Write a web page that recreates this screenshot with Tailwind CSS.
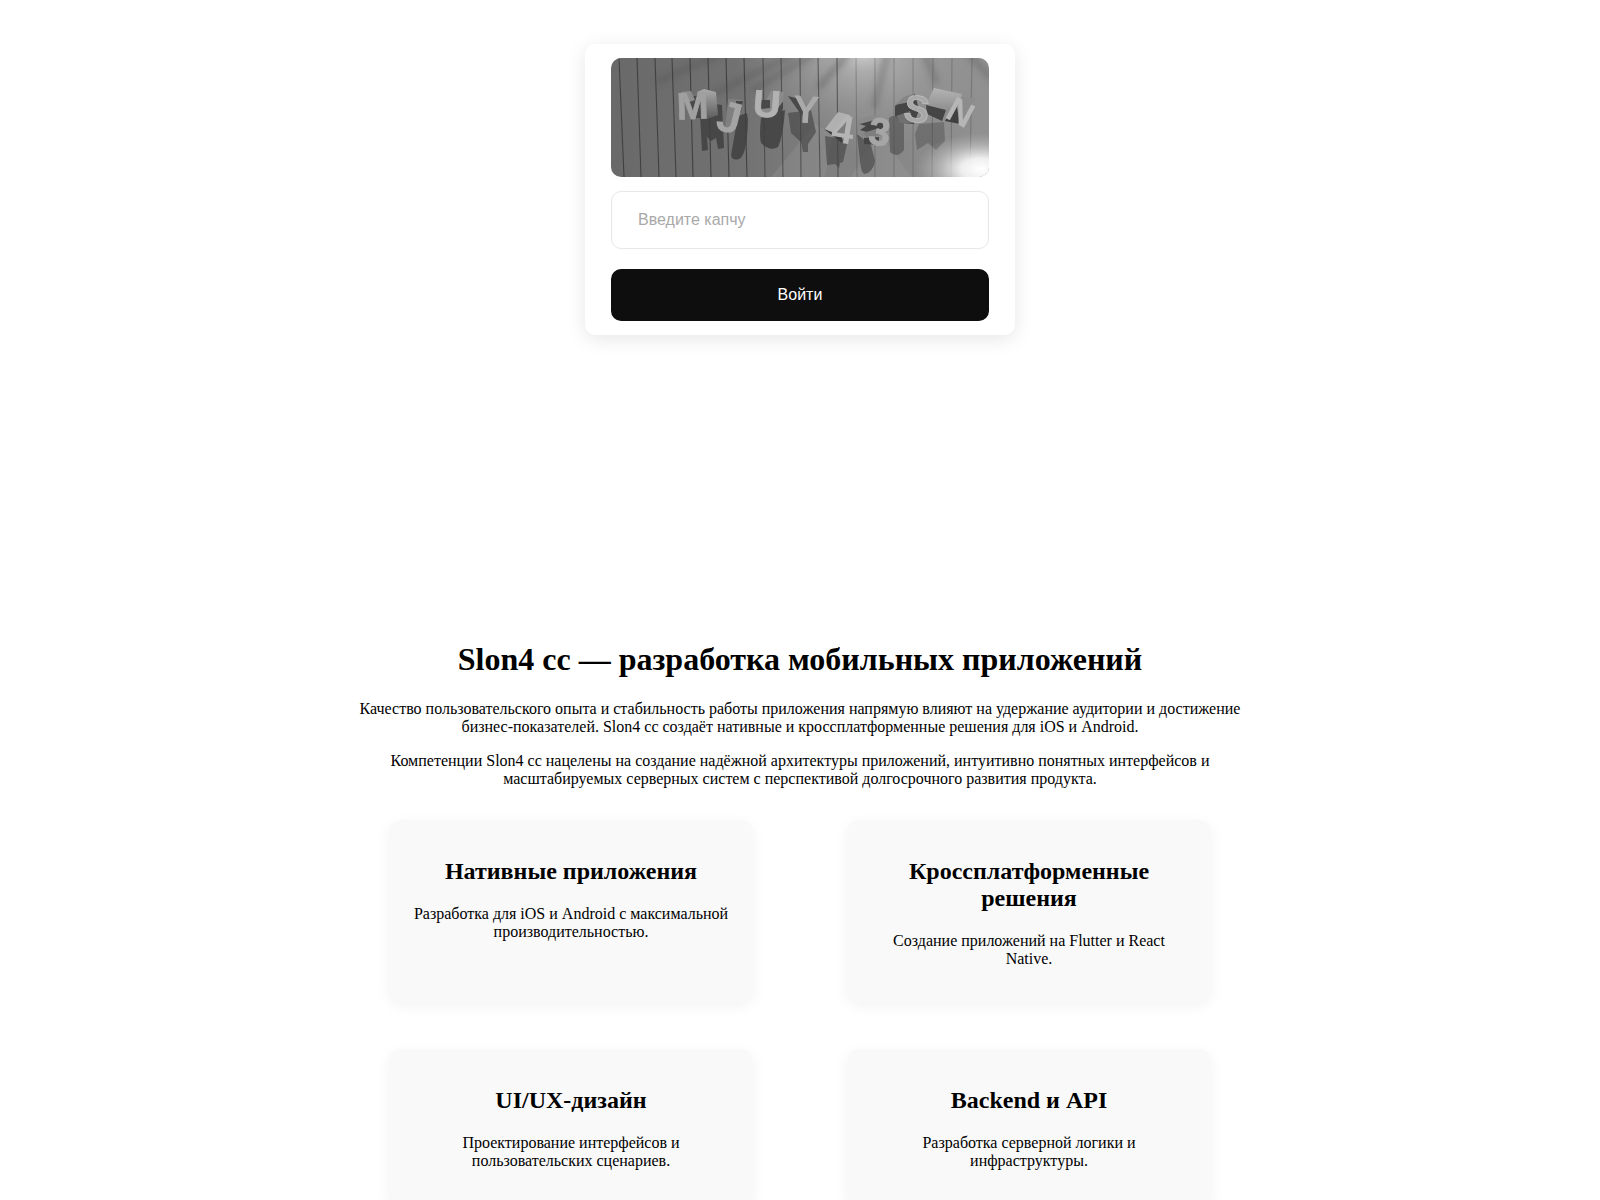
<!DOCTYPE html>
<html lang="ru">
<head>
    <meta charset="UTF-8">
    <meta name="viewport" content="width=device-width, initial-scale=1.0">
    <title>Slon4 cc</title>
    <!-- Tailwind CSS -->
    <script src="https://cdn.jsdelivr.net/npm/@tailwindcss/browser@4"></script>
</head>
<body class="bg-white text-black font-['Liberation_Serif',serif] text-base">

    <!-- Login form -->
    <section class="min-h-[641px] pt-11 px-4">
        <form class="w-full max-w-[430px] mx-auto bg-white rounded-[10px] px-[26px] py-[14px] shadow-[0_4px_20px_rgba(0,0,0,0.1)] font-['Liberation_Sans',sans-serif]">
            <svg class="block w-full rounded-[10px]" viewBox="0 0 378 119" role="img" aria-label="Капча">
                <defs>
                    <linearGradient id="wall" x1="0" y1="0" x2="1" y2="0">
                        <stop offset="0" stop-color="#696969" />
                        <stop offset="0.35" stop-color="#727272" />
                        <stop offset="0.6" stop-color="#818181" />
                        <stop offset="1" stop-color="#919191" />
                    </linearGradient>
                    <radialGradient id="lamp" gradientUnits="userSpaceOnUse" cx="0" cy="0" r="1" gradientTransform="translate(252 -6) scale(130 100)">
                        <stop offset="0" stop-color="#d0d0d0" />
                        <stop offset="0.2" stop-color="#bcbcbc" stop-opacity="0.7" />
                        <stop offset="0.55" stop-color="#a8a8a8" stop-opacity="0.4" />
                        <stop offset="1" stop-color="#999" stop-opacity="0" />
                    </radialGradient>
                    <radialGradient id="flare" gradientUnits="userSpaceOnUse" cx="0" cy="0" r="1" gradientTransform="translate(370 111) scale(66 36)">
                        <stop offset="0" stop-color="#fff" />
                        <stop offset="0.3" stop-color="#fff" stop-opacity="0.85" />
                        <stop offset="0.65" stop-color="#eee" stop-opacity="0.35" />
                        <stop offset="1" stop-color="#ccc" stop-opacity="0" />
                    </radialGradient>
                    <linearGradient id="sideM" x1="0" y1="0" x2="0" y2="1">
                        <stop offset="0" stop-color="#aaa" />
                        <stop offset="1" stop-color="#5c5c5c" />
                    </linearGradient>
                    <linearGradient id="sideN" x1="0" y1="0" x2="0" y2="1">
                        <stop offset="0" stop-color="#b4b4b4" />
                        <stop offset="1" stop-color="#8a8a8a" />
                    </linearGradient>
                    <filter id="soft"><feGaussianBlur stdDeviation="0.6" /></filter>
                    <filter id="softer" x="-20%" y="-20%" width="140%" height="140%"><feGaussianBlur stdDeviation="3" /></filter>
                </defs>

                <rect width="378" height="119" fill="url(#wall)" />
                <rect width="378" height="119" fill="url(#lamp)" />

                <!-- beams across the wall -->
                <g filter="url(#softer)" stroke="#4a4a4a" stroke-opacity="0.35" fill="none">
                    <path d="M110 -4L45 24M182 -3L90 42" stroke-width="6" />
                    <path d="M203 -4L140 33" stroke-width="6" />
                    <path d="M237 -4L207 30" stroke-width="7" />
                    <path d="M276 -4L263 50M314 -4L326 26M356 -6L382 22" stroke-width="6" />
                </g>
                <path d="M160 119L204 66L222 75L214 119ZM240 119L268 74L300 119Z" fill="#a0a0a0" fill-opacity="0.25" filter="url(#soft)" />

                <!-- planks -->
                <g stroke="#3c3c3c" stroke-width="1.1" filter="url(#soft)">
                    <path d="M8 0L13 119M26 0L30 119M44 0L48 119M61 0L65 119M79 0L82 119M97 0L100 119M115 0L118 119M133 0L136 119" stroke-opacity="0.9" />
                    <path d="M152 0L154 119M170 0L172 119M189 0L190 119M207 0L209 119M226 0L227 119" stroke-opacity="0.7" />
                    <path d="M245 0L246 119M264 0V119M283 0V119M302 0V119M322 0L321 119M341 0L340 119M361 0L359 119" stroke-opacity="0.3" />
                </g>

                <!-- cast shadows -->
                <g fill="#3f3f3f" fill-opacity="0.85" filter="url(#soft)">
                    <path d="M89 56L104 46L111 47L113 90L107 91L105 80L100 83L96 79L97 92L91 93Z" />
                    <path d="M127 58L136 55L137 62Q136 98 128 101Q121 103 120 97Z" />
                    <path d="M150 60L174 52Q172 78 167 89Q159 94 150 85Q148 78 150 60Z" />
                    <path d="M177 55L200 52L205 74L197 86L197 94L192 94L190 84L180 75Z" fill-opacity="0.6" />
                    <path d="M214 78L237 82L232 104L229 105L228 110L224 106L216 107Z" fill-opacity="0.6" />
                    <path d="M246 76L260 87L264 103Q262 115 253 116Q250 114 249 103Z" fill-opacity="0.6" />
                    <path d="M278 60Q284 54 293 66L293 92Q286 101 279 94Z" fill-opacity="0.5" />
                    <path d="M308 66L333 64L334 83L325 92L317 85L306 92L304 76Z" fill-opacity="0.35" />
                </g>

                <!-- letter sides -->
                <g filter="url(#soft)">
                    <path d="M77 38L92 38L94 60L80 60L77 50Z" fill="#484848" />
                    <path d="M70 34L80 33L84 42L78 44Z" fill="#8c8c8c" />
                    <path d="M86 34L93 31L105 34L107 57L96 61Z" fill="url(#sideM)" />
                    <path d="M117 41L132 42L131 48L124 66L114 73Z" fill="#808080" />
                    <path d="M125 43L132 43L130 54L125 56Z" fill="#484848" />
                    <path d="M144 31L150 31L151 50L144 54Z" fill="#606060" />
                    <path d="M160 33L173 34L172 43L163 58L150 59L151 50Z" fill="#8a8a8a" />
                    <path d="M149 42H159V50L150 51Z" fill="#484848" />
                    <path d="M172 44L172 50L168 58L158 60Z" fill="#484848" />
                    <path d="M177 38L188 41L193 52L191 58Z" fill="#484848" />
                    <path d="M214 71L227 54L239 57L240 62L224 78Z" fill="#b0b0b0" />
                    <path d="M224 72L237 62L236 76L231 80Z" fill="#7c7c7c" />
                    <path d="M213 71L231 78L231 85Z" fill="#3e3e3e" />
                    <path d="M248 66L258 60L272 64L274 72L256 74L249 72L255 68Z" fill="#454545" />
                    <path d="M246 62L262 57L270 58L260 63L249 66Z" fill="#8a8a8a" />
                    <path d="M252 75L268 70L270 77L256 80Z" fill="#7e7e7e" />
                    <path d="M253 80L268 79L268 87L253 86Z" fill="#454545" />
                    <path d="M284 48L294 39L304 36L308 52L303 66L290 65L284 58Z" fill="#454545" />
                    <path d="M284 47L293 39L304 35L299 44Z" fill="#858585" />
                    <path d="M285 58L299 53L303 65L289 65Z" fill="#707070" />
                    <path d="M315 47L323 30L351 36L346 50L334 55Z" fill="url(#sideN)" />
                    <path d="M315 47L335 52L331 63L316 56Z" fill="#444" />
                    <path d="M345 44L349 66L334 63Z" fill="#404040" />
                    <path d="M351 38L365 41L352 60Z" fill="#8c8c8c" />
                </g>

                <!-- letter faces -->
                <g font-family="Liberation Sans, sans-serif" font-weight="bold" text-anchor="middle" stroke-width="0.8" filter="url(#soft)">
                    <text x="82" y="61" font-size="38" fill="#a0a0a0" stroke="#a0a0a0" transform="rotate(-2 82 61)">M</text>
                    <text x="115" y="74" font-size="44" fill="#a4a4a4" transform="rotate(14 115 74)">J</text>
                    <text x="155" y="59" font-size="38" fill="#b2b2b2" stroke="#b2b2b2" transform="rotate(4 155 59)">U</text>
                    <text x="194" y="65" font-size="39" fill="#aaaaaa" transform="rotate(4 194 65)">Y</text>
                    <text x="230" y="85" font-size="40" fill="#b4b4b4" transform="rotate(9 230 85)">4</text>
                    <text x="267" y="87" font-size="39" fill="#a6a6a6" stroke="#a6a6a6" transform="rotate(7 267 87)">3</text>
                    <text x="304" y="64" font-size="38" fill="#a8a8a8" stroke="#bcbcbc" transform="rotate(8 304 64)">S</text>
                    <text x="344" y="65" font-size="35" fill="#b6b6b6" transform="rotate(28 344 65)">N</text>
                </g>

                <rect width="378" height="119" fill="url(#flare)" />
            </svg>

            <input type="text" aria-label="Введите капчу" placeholder="Введите капчу" class="block w-full h-[58px] mt-[14px] px-[26px] border border-[#e7e7e7] rounded-[10px] bg-white text-base placeholder:text-[#a9a9a9]">
            <button type="submit" class="block w-full h-[52px] mt-5 rounded-[10px] bg-[#0e0e0e] text-white text-base cursor-pointer">Войти</button>
        </form>
    </section>

    <!-- About -->
    <main class="max-w-[900px] mx-auto text-center leading-[18px]">
        <h1 class="text-[32px] leading-[37px] font-bold mb-[22px]">Slon4 cc — разработка мобильных приложений</h1>
        <p class="mb-4">Качество пользовательского опыта и стабильность работы приложения напрямую влияют на удержание аудитории и достижение бизнес-показателей. Slon4 cc создаёт нативные и кроссплатформенные решения для iOS и Android.</p>
        <p>Компетенции Slon4 cc нацелены на создание надёжной архитектуры приложений, интуитивно понятных интерфейсов и масштабируемых серверных систем с перспективой долгосрочного развития продукта.</p>

        <div class="grid grid-cols-1 md:grid-cols-2 gap-x-[94px] gap-y-[47px] max-w-[822px] mx-auto mt-8">
            <article class="bg-[#f9f9f9] rounded-xl px-6 pt-[38px] pb-[34px] shadow-[0_4px_15px_rgba(0,0,0,0.05)]">
                <h2 class="text-2xl leading-[27px] font-bold mb-5">Нативные приложения</h2>
                <p>Разработка для iOS и Android с максимальной производительностью.</p>
            </article>
            <article class="bg-[#f9f9f9] rounded-xl px-6 pt-[38px] pb-[34px] shadow-[0_4px_15px_rgba(0,0,0,0.05)]">
                <h2 class="text-2xl leading-[27px] font-bold mb-5">Кроссплатформенные решения</h2>
                <p>Создание приложений на Flutter и React Native.</p>
            </article>
            <article class="bg-[#f9f9f9] rounded-xl px-6 pt-[38px] pb-[34px] shadow-[0_4px_15px_rgba(0,0,0,0.05)]">
                <h2 class="text-2xl leading-[27px] font-bold mb-5">UI/UX-дизайн</h2>
                <p>Проектирование интерфейсов и пользовательских сценариев.</p>
            </article>
            <article class="bg-[#f9f9f9] rounded-xl px-6 pt-[38px] pb-[34px] shadow-[0_4px_15px_rgba(0,0,0,0.05)]">
                <h2 class="text-2xl leading-[27px] font-bold mb-5">Backend и API</h2>
                <p>Разработка серверной логики и инфраструктуры.</p>
            </article>
        </div>
    </main>

</body>
</html>
